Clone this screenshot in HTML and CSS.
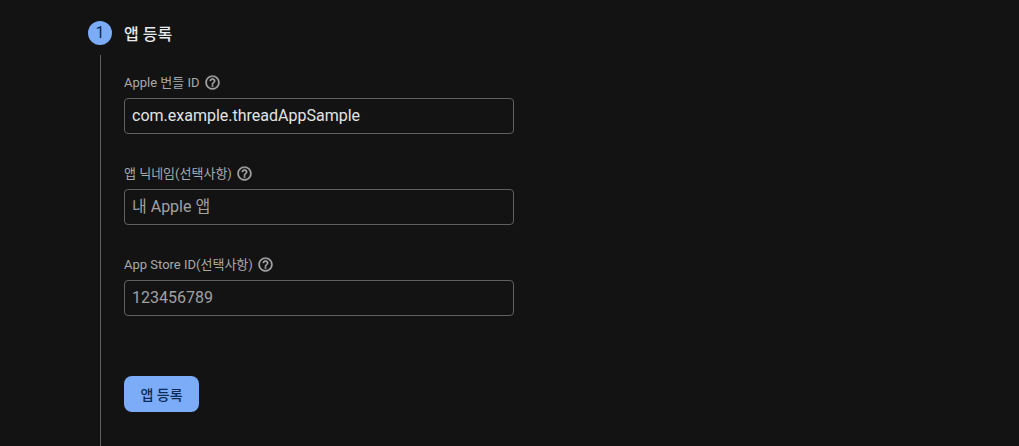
FILE: index.html
```html
<!DOCTYPE html>
<html lang="ko">
<head>
  <meta charset="UTF-8">
  <meta name="viewport" content="width=device-width, initial-scale=1.0">
  <title>앱 등록</title>
  <link rel="stylesheet" href="styles.css">
</head>
<body>

  <div class="step">
    <div class="step-header">
      <span class="step-number">1</span>
      <h2 class="step-title">앱 등록</h2>
    </div>

    <div class="step-body">
      <div class="field">
        <label class="field-label">Apple 번들 ID
          <svg class="help" viewBox="0 0 24 24"><path d="M11 18h2v-2h-2v2zm1-16C6.48 2 2 6.48 2 12s4.48 10 10 10 10-4.48 10-10S17.52 2 12 2zm0 18c-4.41 0-8-3.59-8-8s3.59-8 8-8 8 3.59 8 8-3.59 8-8 8zm0-14c-2.21 0-4 1.79-4 4h2c0-1.1.9-2 2-2s2 .9 2 2c0 2-3 1.75-3 5h2c0-2.25 3-2.5 3-5 0-2.21-1.79-4-4-4z"/></svg>
        </label>
        <input class="field-input" type="text" value="com.example.threadAppSample">
      </div>

      <div class="field">
        <label class="field-label">앱 닉네임(선택사항)
          <svg class="help" viewBox="0 0 24 24"><path d="M11 18h2v-2h-2v2zm1-16C6.48 2 2 6.48 2 12s4.48 10 10 10 10-4.48 10-10S17.52 2 12 2zm0 18c-4.41 0-8-3.59-8-8s3.59-8 8-8 8 3.59 8 8-3.59 8-8 8zm0-14c-2.21 0-4 1.79-4 4h2c0-1.1.9-2 2-2s2 .9 2 2c0 2-3 1.75-3 5h2c0-2.25 3-2.5 3-5 0-2.21-1.79-4-4-4z"/></svg>
        </label>
        <input class="field-input" type="text" placeholder="내 Apple 앱">
      </div>

      <div class="field">
        <label class="field-label">App Store ID(선택사항)
          <svg class="help" viewBox="0 0 24 24"><path d="M11 18h2v-2h-2v2zm1-16C6.48 2 2 6.48 2 12s4.48 10 10 10 10-4.48 10-10S17.52 2 12 2zm0 18c-4.41 0-8-3.59-8-8s3.59-8 8-8 8 3.59 8 8-3.59 8-8 8zm0-14c-2.21 0-4 1.79-4 4h2c0-1.1.9-2 2-2s2 .9 2 2c0 2-3 1.75-3 5h2c0-2.25 3-2.5 3-5 0-2.21-1.79-4-4-4z"/></svg>
        </label>
        <input class="field-input" type="text" placeholder="123456789">
      </div>

      <button class="submit" type="button">앱 등록</button>
    </div>
  </div>

</body>
</html>
```

FILE: styles.css
```css
html, body {
  height: 100%;
}

body {
  margin: 0;
  overflow: hidden;
  background-color: #131313;
  color: #e3e3e3;
  font-family: Roboto, "Noto Sans CJK KR", sans-serif;
}

.step {
  padding: 21px 0 0 88px;
  height: 425px;
  display: flex;
  flex-direction: column;
}

.step-header {
  display: flex;
  align-items: center;
  height: 24px;
}

.step-number {
  width: 24px;
  height: 24px;
  border-radius: 50%;
  background-color: #7cacf8;
  color: #0b2a55;
  font-size: 16px;
  line-height: 24px;
  text-align: center;
}

.step-title {
  margin: 3px 0 0 12px;
  font-size: 16px;
  font-weight: 500;
  line-height: 24px;
  color: #e8eaed;
}

.step-body {
  flex: 1;
  margin: 10px 0 0 12px;
  padding: 0 0 0 23px;
  border-left: 1px solid #5f6063;
}

.field {
  width: 390px;
  height: 91px;
  padding-top: 16px;
  box-sizing: border-box;
}

.field-label {
  display: flex;
  align-items: center;
  gap: 4px;
  height: 20px;
  font-size: 13px;
  color: #a8a9ab;
}

.help {
  width: 17px;
  height: 17px;
  margin-top: 3px;
  fill: #a8a9ab;
  stroke: #a8a9ab;
  stroke-width: 0.4;
}

.field-input {
  display: block;
  width: 100%;
  height: 36px;
  margin-top: 7px;
  padding: 0 7px 2px;
  box-sizing: border-box;
  background: transparent;
  border: 1px solid #5f6063;
  border-radius: 4px;
  outline: none;
  font-family: inherit;
  font-size: 16px;
  color: #e3e3e3;
}

.field-input::placeholder {
  color: #a0a1a3;
  opacity: 1;
}

.submit {
  display: block;
  width: 75px;
  height: 36px;
  margin-top: 48px;
  padding: 0;
  border: none;
  border-radius: 8px;
  background-color: #7cacf8;
  color: #0b2a55;
  font-family: inherit;
  font-size: 14px;
  font-weight: 500;
  cursor: pointer;
}
```
